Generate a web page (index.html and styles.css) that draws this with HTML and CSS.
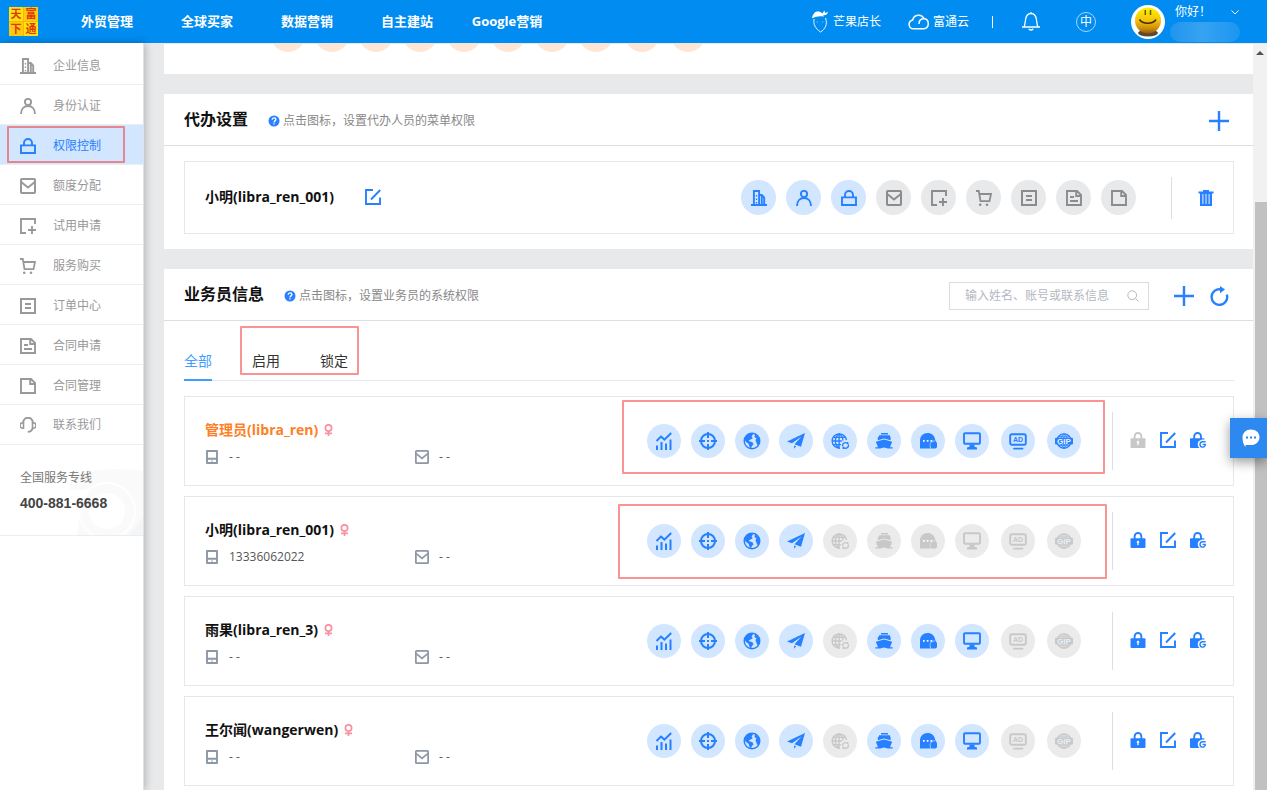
FILE: index.html
```html
<!DOCTYPE html>
<html lang="zh-CN">
<head>
    <meta charset="UTF-8">
    <meta name="viewport" content="width=device-width, initial-scale=1.0">
    <title>权限控制 - 富通天下</title>
    <link rel="stylesheet" href="styles.css">
</head>
<body>
    <!-- 图标库 -->
    <svg class="sprite" aria-hidden="true">
        <symbol id="i-company" viewBox="0 0 16 16"><path d="M0 15h16M2.900 15V1h5.200v14M8.200 5h2.600l2.400 2.600V15M10.800 5v10" fill="none" stroke="currentColor" stroke-width="1.900"/><path d="M4.800 5h1.400v1.500H4.800zM4.800 8.500h1.400V10H4.800zM4.800 12h1.400v1.500H4.800z" fill="currentColor"/></symbol>
        <symbol id="i-user" viewBox="0 0 16 16"><g fill="none" stroke="currentColor" stroke-width="1.900"><circle cx="8" cy="4" r="3.100"/><path d="M1 16c0-5 3-8 7-8s7 3 7 8"/></g></symbol>
        <symbol id="i-lock" viewBox="0 0 16 16"><path d="M1 7.400h14V15H1zM4 7.400V5a4 4 0 0 1 8 0v2.400" fill="none" stroke="currentColor" stroke-width="1.900"/></symbol>
        <symbol id="i-mail" viewBox="0 0 16 16"><rect x="1" y="1" width="14" height="14" rx=".8" fill="none" stroke="currentColor" stroke-width="2"/><path d="M1.500 4.200L8 9.600l6.500-5.400" fill="none" stroke="currentColor" stroke-width="1.900"/></symbol>
        <symbol id="i-trial" viewBox="0 0 16 16"><path d="M6 15H1V1h14v5M12 8v8M8 12h8" fill="none" stroke="currentColor" stroke-width="1.900"/></symbol>
        <symbol id="i-cart" viewBox="0 0 16 16"><path d="M0 1h2.800l1.700 10.200h9L15 4H3.400" fill="none" stroke="currentColor" stroke-width="1.800"/><circle cx="4.200" cy="14.700" r="1.300" fill="currentColor"/><circle cx="11" cy="14.700" r="1.300" fill="currentColor"/></symbol>
        <symbol id="i-order" viewBox="0 0 16 16"><path d="M1 1h14v14H1zM5 6h6M5 10h6" fill="none" stroke="currentColor" stroke-width="2"/></symbol>
        <symbol id="i-apply" viewBox="0 0 16 16"><path d="M1 1h10l4 4v10H1zM10.200 1v5H15M4 7h4M4 11h8" fill="none" stroke="currentColor" stroke-width="1.900"/></symbol>
        <symbol id="i-contract" viewBox="0 0 16 16"><path d="M1 1h10l4 4v10H1zM10.200 1v5H15" fill="none" stroke="currentColor" stroke-width="1.900"/></symbol>
        <symbol id="i-service" viewBox="0 0 16 16"><path d="M3.200 5.500a4.800 4.800 0 0 1 9.600 0M12.800 11c-1 3-2.600 3.900-5 3.900" fill="none" stroke="currentColor" stroke-width="1.900"/><path d="M3.500 5.700H2.800a2.700 2.700 0 0 0 0 5.600h.7zM12.500 5.700h.7a2.700 2.700 0 0 1 0 5.600h-.7z" fill="none" stroke="currentColor" stroke-width="1.600"/></symbol>

        <symbol id="i-chart" viewBox="0 0 18 18"><path d="M1.500 9L6 4.600l3.400 3L16.200 1" fill="none" stroke="currentColor" stroke-width="2"/><path d="M1 13.500h2V18H1zM5.500 10h2v8h-2zM10 11.500h2V18h-2zM14.500 7.500h2V18h-2z" fill="currentColor"/></symbol>
        <symbol id="i-target" viewBox="0 0 18 18"><circle cx="9" cy="9" r="7" fill="none" stroke="currentColor" stroke-width="2"/><path d="M9 0v6M9 12v6M0 9h6M12 9h6M8 9h2" stroke="currentColor" stroke-width="2"/></symbol>
        <symbol id="i-earth" viewBox="0 0 18 18"><circle cx="9" cy="9" r="7.800" fill="none" stroke="currentColor" stroke-width="1.400"/><path d="M1.500 7C2 3.500 5 1.200 9 1.200L10 2.500 8.600 4.500l1.200 1.700-2.300 1.200L5.500 9l4 1.200 1 2.300-1.700 1.500L8 17C6.500 15 5.800 13.500 5.800 12L2.500 9.500zM12 2l4.500 4 .5 4-2 4-1.500-3-1-3 1-1.500L11.500 5z" fill="currentColor"/></symbol>
        <symbol id="i-plane" viewBox="0 0 18 18"><path d="M18 1L0 9.500l5 1.700L14.500 4.500 7.500 12.200l6.500 2.600zM7.200 13.400L7 16.800l2.200-2.600z" fill="currentColor"/></symbol>
        <symbol id="i-globe" viewBox="0 0 20 18"><g fill="none" stroke="currentColor" stroke-width="1.500"><path d="M17.200 8A8 8 0 1 0 10 17M9 1C3.500 5 3.500 13 9 17M9 1c3 2 4.300 4.500 4.200 7.500M9 1v16M1 9h11M2.200 5h13.600M2.200 13h9"/><path d="M12.800 14.500a3.400 3.400 0 0 1 5.800-2.600v-1.800M19.400 13a3.400 3.400 0 0 1-5.800 3v1.800"/></g></symbol>
        <symbol id="i-ship" viewBox="0 0 18 18"><path d="M6 1h7v1.400H6zM4 3.300h11v1.500h.6v3.400L9 6.600 2.800 8.200V4.800H4zM9 7.600l8.200 2.200-2.200 5.400h2.700v1.400h-4.900L9 15.600l-3.800 1H.3v-1.400H3L.8 9.800z" fill="currentColor"/></symbol>
        <symbol id="i-chat" viewBox="0 0 18 18"><path d="M1 16.600V8.700C1 4 4.400 1 8.600 1c4 0 7 2.700 7.600 6.800l1.800 3.400v4l-1.400 1.400z" fill="currentColor"/><path d="M16.400 8.800c-3.400 0-5.600 1.800-5.300 4.800l.6 3" fill="none" stroke="#d2e6ff" stroke-width=".7"/><path d="M4 8h1.700v1.700H4zM7.800 8h1.700v1.700H7.800zM11.500 8h1.700v1.700h-1.700z" fill="#fff"/></symbol>
        <symbol id="i-screen" viewBox="0 0 18 18"><rect x="1" y="1.200" width="16" height="10.600" rx="1" fill="none" stroke="currentColor" stroke-width="1.900"/><path d="M6.500 12.500h5v2.200l2.500.9v1.800H4v-1.800l2.500-.9z" fill="currentColor"/></symbol>
        <symbol id="i-ad" viewBox="0 0 18 18"><rect x="1.200" y="2.200" width="15.600" height="10.600" rx="1.800" fill="none" stroke="currentColor" stroke-width="1.900"/><path d="M5 16.600h8.500" stroke="currentColor" stroke-width="1.900" stroke-linecap="round"/><text x="9" y="10.200" class="svg-text">AD</text></symbol>
        <symbol id="i-gip" viewBox="0 0 20 18"><circle cx="10" cy="9" r="8" fill="none" stroke="currentColor" stroke-width="1.500"/><path d="M10 1v16M10 1C5 4 5 14 10 17M10 1c5 3 5 13 0 16M3.500 4.200h13M3.500 13.800h13" fill="none" stroke="currentColor"/><rect x="0" y="5.400" width="20" height="7.400" rx="1" fill="currentColor"/><text x="10" y="12" class="svg-text svg-text-light">GIP</text></symbol>

        <symbol id="i-plus" viewBox="0 0 20 20"><path d="M10 0v20M0 10h20" stroke="currentColor" stroke-width="2.400"/></symbol>
        <symbol id="i-refresh" viewBox="0 0 20 20"><path d="M12 3.400A7.800 7.800 0 1 0 17.800 8.600" fill="none" stroke="currentColor" stroke-width="2.400"/><path d="M11 0l5 3.600-5 3.600z" fill="currentColor"/></symbol>
        <symbol id="i-search" viewBox="0 0 12 12"><circle cx="5.200" cy="5.200" r="4.400" fill="none" stroke="currentColor"/><path d="M8.400 8.400l3 3" stroke="currentColor"/></symbol>
        <symbol id="i-help" viewBox="0 0 12 12"><circle cx="6" cy="6" r="5.500" fill="currentColor"/><path d="M4.200 4.800c0-2.600 3.700-2.300 3.700-.2C7.900 5.900 6 5.900 6 7.400M6 8.200v1.400" fill="none" stroke="#fff" stroke-width="1.300"/></symbol>
        <symbol id="i-edit" viewBox="0 0 16 16"><path d="M8 1H1v14h14V8.500M6 10.500L15.200 1" fill="none" stroke="currentColor" stroke-width="1.900"/></symbol>
        <symbol id="i-trash" viewBox="0 0 16 16"><path d="M5 0h6v1.600h4.500v2H14V16H2V3.600H.5v-2H5z" fill="currentColor"/><path d="M4.900 4v10M8 4v10M11.100 4v10" stroke="#fff" stroke-width=".9"/></symbol>
        <symbol id="i-locked" viewBox="0 0 16 16"><path d="M4.600 7V4.400a3.400 3.400 0 0 1 6.800 0V7" fill="none" stroke="currentColor" stroke-width="1.900"/><rect x=".5" y="6.200" width="15" height="9.800" rx="1" fill="currentColor"/><path d="M7.500 13v-2a1.100 1.100 0 1 1 1 0v2z" fill="#fff" stroke="#fff" stroke-width=".3"/></symbol>
        <symbol id="i-reset" viewBox="0 0 16 16"><path d="M4.200 7V4.400a3.400 3.400 0 0 1 6.800 0V7" fill="none" stroke="currentColor" stroke-width="1.900"/><path d="M0 7.200q0-1 1-1h12.600q1 0 1 1v.3c-4.400-.4-7.200 2-6.800 5.300.1 1.200.7 2.200 1.700 3.200H1q-1 0-1-1z" fill="currentColor"/><path d="M15.600 9.800h-3.400a2.700 2.700 0 0 0 0 5.300h1.400l1.600-1.700v-1h-2.600" fill="none" stroke="currentColor" stroke-width="1.400"/></symbol>
        <symbol id="i-female" viewBox="0 0 9 12"><circle cx="4.500" cy="3.900" r="3.100" fill="none" stroke="currentColor" stroke-width="1.700"/><path d="M4.500 7v5M1 9.400h7" stroke="currentColor" stroke-width="1.600"/></symbol>
        <symbol id="i-phone" viewBox="0 0 14 14"><path d="M2 1h10v12H2zM2 8.800h10" fill="none" stroke="currentColor" stroke-width="1.900" stroke-linejoin="round"/><path d="M6.200 10.500h1.600v1H6.200z" fill="currentColor"/></symbol>
    </svg>

    <header class="topbar">
        <a class="logo" href="#" aria-label="富通天下"><span>天</span><span>富</span><span>下</span><span>通</span></a>
        <nav class="main-nav">
            <a href="#">外贸管理</a>
            <a href="#">全球买家</a>
            <a href="#">数据营销</a>
            <a href="#">自主建站</a>
            <a href="#">Google营销</a>
        </nav>
        <div class="topbar-right">
            <a class="top-link" href="#">
                <svg width="18" height="24" viewBox="0 0 18 24"><path d="M0 7.500C1 5 2 2 5 1.500c2-.3 4 .3 5.500 2L12.300.5l1 2.600 3-1.400-1.800 3-3.500.8 1 1.200C8 5.800 4 6.500.800 8.200z" fill="#fff"/><path d="M2.200 9c-1.400 5 1.200 9.600 6.300 13 5-3 7.300-8 5-14" fill="none" stroke="#fff" stroke-width=".9"/><path d="M4.500 12h1.500M10 12h1.500" stroke="#8fcbf8" stroke-width=".7"/></svg>
                芒果店长
            </a>
            <a class="top-link top-cloud" href="#">
                <svg width="22" height="17" viewBox="0 0 22 17"><path d="M5.500 15.800a4.500 4.500 0 0 1-.8-8.900A6 6 0 0 1 16 5.600a5.200 5.200 0 0 1 .2 10.200zM11 11c0-3 2-5.200 5-5.400" fill="none" stroke="#fff" stroke-width="1.500"/></svg>
                富通云
            </a>
            <span class="top-line"></span>
            <button class="top-btn" aria-label="消息">
                <svg width="18" height="19" viewBox="0 0 18 19"><path d="M0 15h18M2.200 15c.8-3 1-4.500 1.300-7C4 4 6 1.500 9 1.500S14 4 14.500 8c.3 2.500.5 4 1.300 7M9 0v2M6.800 16.800c.6 1.600 3.800 1.600 4.400 0" fill="none" stroke="#fff" stroke-width="1.300"/></svg>
            </button>
            <button class="top-btn lang">中</button>
            <div class="account">
                <svg class="avatar" width="34" height="34" viewBox="0 0 34 34">
                    <defs><linearGradient id="face" x1="0" y1="0" x2="0" y2="1"><stop offset="0" stop-color="#fff200"/><stop offset=".5" stop-color="#f2c40c"/><stop offset=".8" stop-color="#cf8e0a"/><stop offset="1" stop-color="#8a5a14"/></linearGradient></defs>
                    <circle cx="17" cy="17" r="17" fill="#fff"/><ellipse cx="17" cy="28" rx="10" ry="3.500" fill="#5c4830"/><circle cx="17" cy="15.500" r="13" fill="url(#face)"/>
                    <path d="M14.300 5v5M19.500 5v5" stroke="#6a5400" stroke-width="1.500"/><path d="M8.500 14.500c3 5 13.500 5 16.500 0" fill="none" stroke="#4a2800" stroke-width="1.500"/>
                </svg>
                <div class="account-info">
                    <span>你好！</span>
                    <i class="account-mask"></i>
                </div>
                <svg class="account-arrow" width="8" height="5" viewBox="0 0 8 5"><path d="M.5.500L4 4 7.500.500" fill="none" stroke="#fff"/></svg>
            </div>
        </div>
    </header>

    <div class="page">
        <aside class="sidebar">
            <nav class="side-nav">
                <a href="#"><svg><use href="#i-company"/></svg>企业信息</a>
                <a href="#"><svg><use href="#i-user"/></svg>身份认证</a>
                <a href="#" class="active"><svg><use href="#i-lock"/></svg>权限控制</a>
                <a href="#"><svg><use href="#i-mail"/></svg>额度分配</a>
                <a href="#"><svg><use href="#i-trial"/></svg>试用申请</a>
                <a href="#"><svg><use href="#i-cart"/></svg>服务购买</a>
                <a href="#"><svg><use href="#i-order"/></svg>订单中心</a>
                <a href="#"><svg><use href="#i-apply"/></svg>合同申请</a>
                <a href="#"><svg><use href="#i-contract"/></svg>合同管理</a>
                <a href="#"><svg><use href="#i-service"/></svg>联系我们</a>
            </nav>
            <div class="hotline">
                <svg class="hotline-bg" width="74" height="66" viewBox="0 0 74 66"><path d="M0 20Q2 4 22 2q26-4 52 0v64H8Q10 36 22 20q-12 2-22 0z" fill="#fafafb"/><circle cx="38" cy="42" r="28" fill="none" stroke="#fff" stroke-width="2"/><circle cx="38" cy="42" r="18" fill="#fff"/><path d="M74 48v18H60z" fill="#f3f5f6"/></svg>
                <p>全国服务专线</p>
                <strong>400-881-6668</strong>
            </div>
        </aside>

        <main class="content">
            <section class="panel panel-top">
                <div class="peach-row" id="peach-row"></div>
            </section>

            <section class="panel">
                <div class="panel-head">
                    <h2>代办设置</h2>
                    <p class="tip"><svg><use href="#i-help"/></svg>点击图标，设置代办人员的菜单权限</p>
                    <button class="head-btn" aria-label="添加代办"><svg><use href="#i-plus"/></svg></button>
                </div>
                <div class="agent-card">
                    <strong class="name">小明(libra_ren_001)</strong>
                    <button class="icon-btn agent-edit" aria-label="编辑"><svg><use href="#i-edit"/></svg></button>
                    <div class="menu-auth" id="menu-auth"></div>
                    <div class="agent-del">
                        <button class="icon-btn" aria-label="删除"><svg><use href="#i-trash"/></svg></button>
                    </div>
                </div>
            </section>

            <section class="panel panel-staff">
                <div class="panel-head">
                    <h2>业务员信息</h2>
                    <p class="tip"><svg><use href="#i-help"/></svg>点击图标，设置业务员的系统权限</p>
                    <div class="search">
                        <input type="text" placeholder="输入姓名、账号或联系信息" aria-label="搜索业务员">
                        <svg><use href="#i-search"/></svg>
                    </div>
                    <button class="head-btn" aria-label="添加业务员"><svg><use href="#i-plus"/></svg></button>
                    <button class="head-btn" aria-label="刷新"><svg><use href="#i-refresh"/></svg></button>
                </div>
                <div class="tabs">
                    <button class="tab active">全部</button>
                    <div class="tab-group">
                        <button class="tab">启用</button>
                        <button class="tab">锁定</button>
                    </div>
                </div>
                <div class="staff-list" id="staff-list"></div>
            </section>
        </main>

        <div class="scrollbar" aria-hidden="true">
            <i class="scroll-up"></i>
            <i class="scroll-thumb"></i>
        </div>
    </div>

    <button class="chat-float" aria-label="在线咨询">
        <svg width="18" height="18" viewBox="0 0 18 18"><path d="M9 .5c5 0 8.500 3.400 8.500 7.700S14 16 9 16H3.500v2C1.500 16 .5 12 .5 8.200.5 4 4 .5 9 .5z" fill="#fff"/><path d="M4 7.500h2v2H4zM8 7.500h2v2H8zM12 7.500h2v2h-2z" fill="#2d88ef"/></svg>
    </button>

    <script>
        const icono = id => `<svg><use href="#i-${id}"/></svg>`;

        // 代办人员菜单权限
        const menus = ['company', 'user', 'lock', 'mail', 'trial', 'cart', 'order', 'apply', 'contract'];
        const menuNames = ['企业信息', '身份认证', '权限控制', '额度分配', '试用申请', '服务购买', '订单中心', '合同申请', '合同管理'];
        document.getElementById('menu-auth').innerHTML = menus.map((m, i) =>
            `<button class="circle ${i < 3 ? 'on' : ''}" aria-label="${menuNames[i]}">${icono(m)}</button>`
        ).join('');

        // 业务员系统权限，1 开通 0 关闭
        const systems = ['chart', 'target', 'earth', 'plane', 'globe', 'ship', 'chat', 'screen', 'ad', 'gip'];
        const staff = [
            { name: '管理员(libra_ren)', phone: '- -', auth: '1111111111', cls: 'admin' },
            { name: '小明(libra_ren_001)', phone: '13336062022', auth: '1111000000', cls: 'marked' },
            { name: '雨果(libra_ren_3)', phone: '- -', auth: '1111011100', cls: '' },
            { name: '王尔闻(wangerwen)', phone: '- -', auth: '1111011100', cls: '' }
        ];

        document.getElementById('staff-list').innerHTML = staff.map(s => `
            <article class="staff-card ${s.cls}">
                <div class="staff-info">
                    <div class="staff-name"><strong class="name">${s.name}</strong>${icono('female')}</div>
                    <div class="staff-contact">
                        <span class="phone">${icono('phone')}${s.phone}</span>
                        <span class="mail">${icono('mail')}- -</span>
                    </div>
                </div>
                <div class="sys-auth">
                    ${systems.map((id, i) =>
                        `<button class="circle sys ${s.auth[i] === '1' ? 'on' : ''}" aria-label="${id}">${icono(id)}</button>`
                    ).join('')}
                </div>
                <div class="staff-actions">
                    <button class="icon-btn lock-btn" aria-label="锁定">${icono('locked')}</button>
                    <button class="icon-btn" aria-label="编辑">${icono('edit')}</button>
                    <button class="icon-btn" aria-label="重置密码">${icono('reset')}</button>
                </div>
            </article>
        `).join('');

        document.getElementById('peach-row').innerHTML = '<i></i>'.repeat(systems.length);
    </script>
</body>
</html>
```

FILE: styles.css
```css
:root {
    --blue: #2680ff;
    --blue-light: #d2e6ff;
    --header: #008cf0;
    --border: #e4e7ee;
    --gray: #999;
    --mark: #fa9494;
}

* {
    box-sizing: border-box;
}

body {
    margin: 0;
    height: 100vh;
    display: flex;
    flex-direction: column;
    overflow: hidden;
    background-color: #e8e9eb;
    color: #333;
    font-family: "Open Sans", "Noto Sans CJK SC", sans-serif;
    font-size: 12px;
    line-height: 20px;
}

a {
    color: inherit;
    text-decoration: none;
}

button {
    padding: 0;
    border: none;
    background: none;
    color: inherit;
    font: inherit;
    cursor: pointer;
}

h2, p {
    margin: 0;
}

svg {
    display: block;
    flex: none;
    width: 16px;
    height: 16px;
}

svg[width] {
    width: auto;
    height: auto;
}

.sprite {
    position: absolute;
    width: 0;
    height: 0;
}

.svg-text {
    font: bold 7px "Liberation Sans", sans-serif;
    text-anchor: middle;
    fill: currentColor;
}

.svg-text-light {
    font-size: 9px;
    fill: #e6f1ff;
}

/* 顶部导航 */
.topbar {
    flex: none;
    display: flex;
    align-items: center;
    height: 43px;
    padding-left: 9px;
    background-color: var(--header);
    color: #fff;
}

.logo {
    display: grid;
    grid-template-columns: 14px 14px;
    gap: 1px;
    background-color: #f6b60c;
    color: #e0370a;
    font-size: 11px;
    font-weight: bold;
    line-height: 14px;
    text-align: center;
}

.logo span {
    background-color: #ffe30b;
}

.logo span:nth-child(2),
.logo span:nth-child(3) {
    background-color: #fccb0d;
}

.main-nav {
    display: flex;
    margin-left: 19px;
    padding-bottom: 2px;
    font-size: 13px;
    font-weight: bold;
}

.main-nav a {
    width: 100px;
    text-align: center;
}

.topbar-right {
    display: flex;
    align-items: center;
    height: 100%;
    margin-left: auto;
    padding-right: 28px;
}

.top-link {
    display: flex;
    align-items: center;
    gap: 3px;
}

.top-cloud {
    margin-left: 27px;
}

.top-line {
    width: 1px;
    height: 12px;
    margin: 0 29px 0 23px;
    background-color: #fff;
}

.lang {
    width: 20px;
    height: 20px;
    margin: 0 35px 0 36px;
    border: 1px solid #a9d8fa;
    border-radius: 50%;
    line-height: 16px;
}

.account {
    display: flex;
    gap: 5px;
    height: 38px;
    align-items: center;
}

.account-info {
    display: flex;
    flex-direction: column;
    width: 65px;
    height: 40px;
}

.account-info span {
    margin-left: 5px;
}

.account-mask {
    width: 70px;
    height: 20px;
    border-radius: 10px;
    background: linear-gradient(90deg, #2094ee, #36a3f2 45%, #1c96f1);
}

.account-arrow {
    align-self: flex-start;
    margin: 7px 0 0 -9px;
}

/* 布局 */
.page {
    flex: 1;
    display: flex;
    min-height: 0;
}

.sidebar {
    flex: none;
    width: 144px;
    padding-top: 2px;
    border-right: 1px solid #dfe2e6;
    background-color: #fff;
    box-shadow: 1px 0 8px rgba(0, 0, 0, 0.25);
}

.side-nav a {
    position: relative;
    display: flex;
    align-items: center;
    gap: 17px;
    height: 40px;
    padding: 2px 0 0 20px;
    border-bottom: 1px solid #e9eef2;
    color: var(--gray);
}

.side-nav a:last-child {
    padding-top: 0;
}

.side-nav a.active {
    background-color: var(--blue-light);
    color: var(--blue);
}

.side-nav a.active::after {
    content: "";
    position: absolute;
    inset: 1px 18px 1px 7px;
    border: 2px solid #e8868f;
    border-radius: 1px;
}

.hotline {
    position: relative;
    height: 91px;
    padding: 23px 0 0 20px;
    border-bottom: 1px solid #e9eef2;
    color: #777;
}

.hotline p,
.hotline strong {
    position: relative;
}

.hotline strong {
    display: block;
    margin-top: 5px;
    color: #444;
    font: bold 14px/20px "Liberation Sans", sans-serif;
}

.hotline-bg {
    position: absolute;
    right: 0;
    bottom: 0;
}

.content {
    flex: 1;
    display: flex;
    flex-direction: column;
    gap: 20px;
    min-width: 0;
    padding: 1px 0 0 20px;
    overflow: hidden;
}

.panel {
    flex: none;
    background-color: #fff;
}

.panel-top {
    height: 30px;
}

.peach-row {
    display: flex;
    align-items: flex-end;
    gap: 10px;
    height: 8px;
    padding-left: 107px;
    overflow: hidden;
}

.peach-row i {
    flex: none;
    width: 34px;
    height: 34px;
    border-radius: 50%;
    background-color: #ffe5d3;
}

.peach-row i:nth-child(n+9) {
    margin-left: 2px;
}

.panel-head {
    display: flex;
    align-items: center;
    height: 52px;
    padding: 2px 24px 0 20px;
    border-bottom: 1px solid #dcdee2;
}

.panel-head h2 {
    padding-bottom: 4px;
    color: #111;
    font-size: 16px;
    line-height: 24px;
}

.tip {
    display: flex;
    align-items: center;
    gap: 3px;
    margin: 0 auto 0 20px;
    color: #888;
}

.tip svg {
    width: 12px;
    height: 12px;
    color: var(--blue);
}

.head-btn {
    margin-left: 15px;
    color: var(--blue);
}

.head-btn svg {
    width: 20px;
    height: 20px;
}

.search {
    position: relative;
    width: 200px;
    margin-right: 10px;
}

.search input {
    display: block;
    width: 100%;
    height: 28px;
    padding: 0 30px 0 15px;
    border: 1px solid #d9dce3;
    font: inherit;
    outline: none;
}

.search input::placeholder {
    color: #b4b8bf;
}

.search svg {
    position: absolute;
    top: 8px;
    right: 10px;
    width: 12px;
    height: 12px;
    color: #b4b8bf;
}

/* 权限图标 */
.name {
    color: #111;
    font-size: 14px;
}

.circle {
    flex: none;
    display: flex;
    align-items: center;
    justify-content: center;
    width: 35px;
    height: 35px;
    border-radius: 50%;
    background-color: #e8e9eb;
    color: #8c8c8c;
}

.circle.sys {
    width: 34px;
    height: 34px;
    background-color: #ebebeb;
    color: #c8c8c8;
}

.circle.sys svg {
    width: 18px;
    height: 18px;
}

.circle.on,
.circle.sys.on {
    background-color: var(--blue-light);
    color: var(--blue);
}

.icon-btn {
    color: var(--blue);
}

.agent-card {
    display: flex;
    align-items: center;
    height: 73px;
    margin: 15px 19px 15px 20px;
    padding: 0 19px 0 20px;
    border: 1px solid var(--border);
}

.agent-card .name,
.agent-edit {
    padding-bottom: 2px;
}

.agent-edit {
    margin-left: 31px;
}

.menu-auth {
    display: flex;
    gap: 10px;
    margin-left: auto;
}

.agent-del {
    display: flex;
    align-items: center;
    height: 42px;
    margin-left: 35px;
    padding-left: 26px;
    border-left: 1px solid #dcdee2;
}

/* 业务员列表 */
.tabs {
    display: flex;
    align-items: flex-end;
    gap: 40px;
    height: 60px;
    margin: 0 19px 0 20px;
    border-bottom: 1px solid #e4e9ef;
    font-size: 14px;
}

.tab {
    height: 40px;
    margin-bottom: -1px;
    padding-top: 2px;
    border-bottom: 2px solid transparent;
    color: #333;
}

.tab.active {
    border-color: #409eff;
    color: #409eff;
}

.tab-group {
    position: relative;
    display: flex;
    gap: 40px;
}

.tab-group::after {
    content: "";
    position: absolute;
    inset: -15px -11px 5px -12px;
    border: 2px solid var(--mark);
    border-radius: 1px;
    pointer-events: none;
}

.staff-list {
    display: flex;
    flex-direction: column;
    gap: 10px;
    padding: 15px 19px 20px 20px;
}

.staff-card {
    position: relative;
    display: flex;
    align-items: center;
    height: 90px;
    padding: 0 27px 0 20px;
    border: 1px solid var(--border);
}

.staff-info {
    flex: 1;
    padding-top: 4px;
}

.staff-name {
    display: flex;
    align-items: center;
    gap: 6px;
    margin-bottom: 7px;
}

.staff-name svg {
    width: 9px;
    height: 12px;
    color: #fa8fa0;
}

.admin .name {
    color: #ff7f27;
}

.staff-contact {
    display: flex;
    color: #555;
}

.staff-contact span {
    display: flex;
    align-items: center;
    width: 210px;
}

.staff-contact svg {
    width: 14px;
    height: 14px;
    margin-right: 10px;
    color: #8d97a5;
}

.sys-auth {
    position: relative;
    display: flex;
    gap: 10px;
}

.sys-auth .circle:nth-child(n+9) {
    margin-left: 2px;
}

.admin .sys-auth::after,
.marked .sys-auth::after {
    content: "";
    position: absolute;
    inset: -24px -24px -16px -25px;
    border: 2px solid var(--mark);
    border-radius: 1px;
    pointer-events: none;
}

.marked .sys-auth::after {
    inset: -20px -26px -21px -29px;
}

.staff-actions {
    display: flex;
    align-items: center;
    gap: 14px;
    height: 58px;
    margin-left: 31px;
    padding: 0 0 2px 17px;
    border-left: 1px solid #dcdee2;
}

.admin .lock-btn {
    color: #c8c8c8;
}

/* 滚动条 */
.scrollbar {
    flex: none;
    display: flex;
    flex-direction: column;
    align-items: flex-end;
    width: 14px;
    margin-top: 1px;
    background-color: #f1f1f1;
}

.scroll-up {
    margin: 7px 3px 0 0;
    border: 4px solid transparent;
    border-top: none;
    border-bottom-color: #505050;
}

.scroll-thumb {
    flex: 1;
    width: 12px;
    margin-top: 147px;
    background-color: #c1c1c1;
}

.chat-float {
    position: fixed;
    top: 418px;
    right: 0;
    display: flex;
    align-items: center;
    justify-content: center;
    width: 37px;
    height: 40px;
    padding-left: 4px;
    background-color: #2d88ef;
    box-shadow: 0 4px 12px rgba(0, 0, 0, 0.4);
}
```
